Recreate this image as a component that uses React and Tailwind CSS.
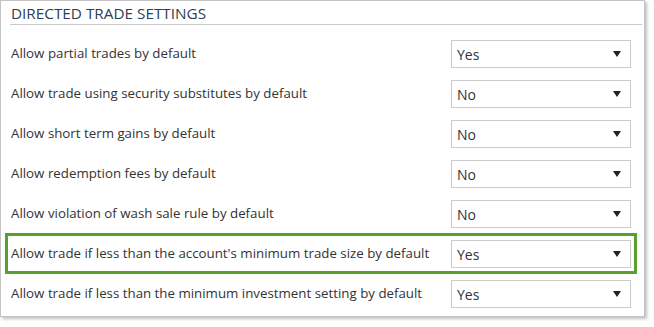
import React from "react";

const rows = [
  ["Allow partial trades by default", "Yes"],
  ["Allow trade using security substitutes by default", "No"],
  ["Allow short term gains by default", "No"],
  ["Allow redemption fees by default", "No"],
  ["Allow violation of wash sale rule by default", "No"],
  ["Allow trade if less than the account's minimum trade size by default", "Yes", true],
  ["Allow trade if less than the minimum investment setting by default", "Yes"],
];

function Select({ value }) {
  return (
    <div className="flex h-[28px] w-[180px] items-center justify-between border border-[#cccccc] bg-white pl-[5px] pr-[9px] text-[14px] text-[#333333]">
      <span>{value}</span>
      <svg width="8" height="6" viewBox="0 0 8 6" className="block">
        <path d="M0 0 L8 0 L4 6 Z" fill="#222222" />
      </svg>
    </div>
  );
}

export default function App() {
  return (
    <div className="bg-white w-[654px] h-[327px]" style={{ fontFamily: "'Open Sans', 'Noto Sans', sans-serif" }}>
      <div className="w-[645px] h-[317px] border border-[#c4c4c4] bg-white shadow-[2px_2px_3px_rgba(0,0,0,0.25)]">
        <div className="ml-[9px] mr-[2px] h-[24px] border-b border-[#c8c8c8] pl-[1px] pt-[3px] text-[15.3px] leading-[18px] text-[#2e3f52]">
          DIRECTED TRADE SETTINGS
        </div>
        <div className="mt-[9px]">
          {rows.map(([label, value, hl], i) => (
            <div key={i} className="relative flex h-[40px] items-center justify-between pl-[10px] pr-[13px]">
              <span className="text-[13.3px] text-[#333333]">{label}</span>
              <Select value={value} />
              {hl && (
                <span className="pointer-events-none absolute left-[4px] right-[7px] top-[-1px] bottom-[0px] border-[3px] border-[#5b9f2c]" />
              )}
            </div>
          ))}
        </div>
      </div>
    </div>
  );
}
